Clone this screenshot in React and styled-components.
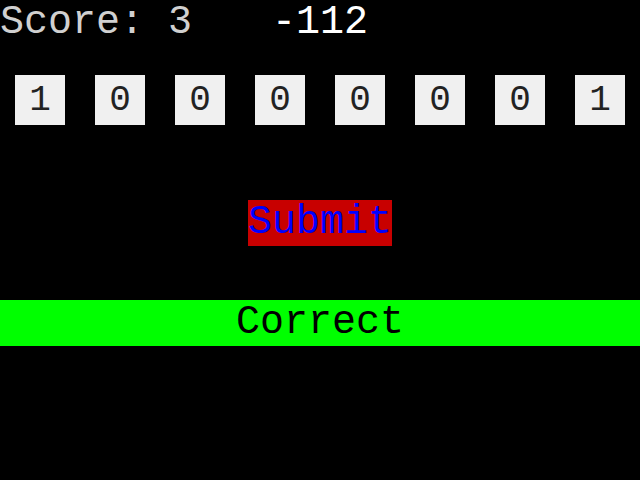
import React from "react";
import styled, { createGlobalStyle } from "styled-components";

const Global = createGlobalStyle`
  html, body { margin: 0; padding: 0; background: #000; }
  body { font-family: "Liberation Mono", "Courier New", monospace; }
`;

const Page = styled.div`
  width: 640px;
  height: 480px;
  background: #000;
  display: flex;
  flex-direction: column;
  font-family: "Liberation Mono", "Courier New", monospace;
`;

const TopBar = styled.div`
  position: relative;
  height: 46px;
  display: flex;
  align-items: center;
  font-size: 40px;
  line-height: 46px;
`;

const Score = styled.span`
  color: #d0d0d0;
  padding-left: 0;
`;

const Value = styled.span`
  position: absolute;
  left: 272px;
  top: 0;
  color: #ffffff;
`;

const Bits = styled.div`
  display: grid;
  grid-template-columns: repeat(8, 80px);
  margin-top: 29px;
`;

const Cell = styled.div`
  display: flex;
  justify-content: center;
`;

const Bit = styled.div`
  width: 50px;
  height: 50px;
  background: #f0f0f0;
  color: #222;
  font-size: 36px;
  display: flex;
  align-items: center;
  justify-content: center;
`;

const SubmitRow = styled.div`
  display: flex;
  justify-content: center;
  margin-top: 75px;
`;

const Submit = styled.div`
  background: #c80000;
  color: #0000ff;
  font-size: 40px;
  height: 46px;
  line-height: 46px;
  width: 144px;
  text-align: center;
`;

const Result = styled.div`
  margin-top: 54px;
  height: 46px;
  line-height: 46px;
  background: #00ff00;
  color: #000;
  font-size: 40px;
  text-align: center;
`;

const bits = [1, 0, 0, 0, 0, 0, 0, 1];

export default function App() {
  return (
    <>
      <Global />
      <Page>
        <TopBar>
          <Score>Score: 3</Score>
          <Value>-112</Value>
        </TopBar>
        <Bits>
          {bits.map((b, i) => (
            <Cell key={i}>
              <Bit>{b}</Bit>
            </Cell>
          ))}
        </Bits>
        <SubmitRow>
          <Submit>Submit</Submit>
        </SubmitRow>
        <Result>Correct</Result>
      </Page>
    </>
  );
}
